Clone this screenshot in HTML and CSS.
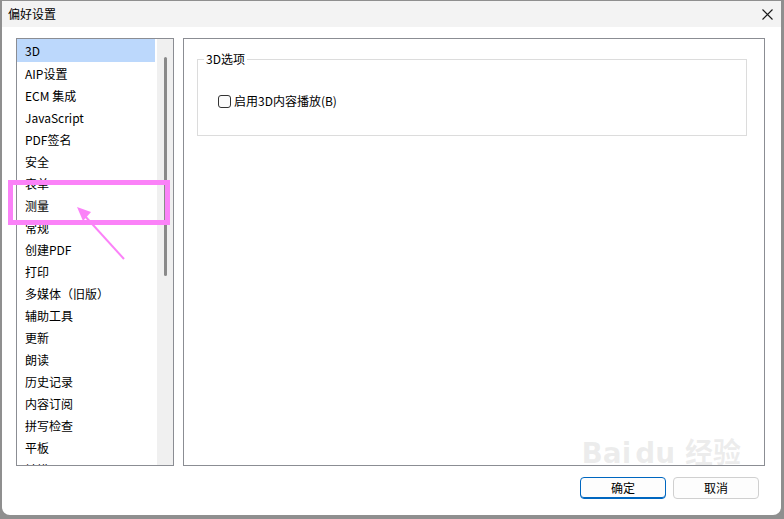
FILE: index.html
```html
<!DOCTYPE html>
<html lang="zh-CN">
<head>
<meta charset="utf-8">
<title>偏好设置</title>
<link rel="stylesheet" href="styles.css">
</head>
<body>
<div class="window">
  <div class="titlebar">
    <span class="title">偏好设置</span>
    <svg class="close" width="11" height="11" viewBox="0 0 11 11"><path d="M0.5 0.5 L10.5 10.5 M10.5 0.5 L0.5 10.5" stroke="#1a1a1a" stroke-width="1.1" fill="none"/></svg>
  </div>
  <div class="content">
    <div class="listbox">
      <ul class="items">
        <li class="item selected">3D</li>
        <li class="item">AIP设置</li>
        <li class="item">ECM 集成</li>
        <li class="item">JavaScript</li>
        <li class="item">PDF签名</li>
        <li class="item">安全</li>
        <li class="item">表单</li>
        <li class="item">测量</li>
        <li class="item">常规</li>
        <li class="item">创建PDF</li>
        <li class="item">打印</li>
        <li class="item">多媒体（旧版）</li>
        <li class="item">辅助工具</li>
        <li class="item">更新</li>
        <li class="item">朗读</li>
        <li class="item">历史记录</li>
        <li class="item">内容订阅</li>
        <li class="item">拼写检查</li>
        <li class="item">平板</li>
        <li class="item">触摸</li>
      </ul>
      <div class="scrollbar"><div class="thumb"></div></div>
    </div>
    <div class="panel">
      <fieldset class="group">
        <legend class="legend">3D选项</legend>
        <label class="check-row"><span class="checkbox"></span><span>启用3D内容播放(B)</span></label>
      </fieldset>
    </div>
  </div>
  <div class="footer">
    <button class="btn primary">确定</button>
    <button class="btn">取消</button>
  </div>
  <div class="watermark">Bai<span class="wm-du">du</span> 经验</div>
</div>
<svg class="annot" width="784" height="519" viewBox="0 0 784 519">
  <rect x="10.5" y="182.5" width="157" height="40" fill="none" stroke="#fb82f8" stroke-width="5"/>
  <line x1="124" y1="259" x2="84" y2="215" stroke="#fb82f8" stroke-width="2"/>
  <polygon points="77,207 91,212 83,221" fill="#fb82f8"/>
</svg>
</body>
</html>
```
FILE: styles.css
```css
* { box-sizing: border-box; }
html, body { margin: 0; padding: 0; }
body {
  width: 784px;
  height: 519px;
  background: #8f8f8f;
  padding: 1px 3px 4px 2px;
  font-family: "Noto Sans CJK SC", "Microsoft YaHei", sans-serif;
  font-size: 12px;
  color: #000;
  overflow: hidden;
  position: relative;
}
.window {
  width: 779px;
  height: 514px;
  background: #fff;
  border-radius: 0 0 8px 8px;
  display: flex;
  flex-direction: column;
  position: relative;
  overflow: hidden;
}
.titlebar {
  height: 26px;
  background: #f3f3f3;
  display: flex;
  align-items: center;
  justify-content: space-between;
  padding: 0 8px 0 6px;
  flex: none;
}
.title { font-size: 12px; line-height: 16px; }
.close { display: block; margin-top: 1px; }
.content {
  display: flex;
  gap: 9px;
  padding: 11px 16px 0 14px;
  height: 439px;
  flex: none;
}
.listbox {
  width: 158px;
  height: 428px;
  border: 1px solid #8b8d93;
  display: flex;
  overflow: hidden;
  flex: none;
}
.items {
  list-style: none;
  margin: 0 2px 0 0;
  padding: 0;
  flex: 1;
  overflow: hidden;
}
.item {
  height: 22px;
  line-height: 24px;
  padding-left: 8px;
  white-space: nowrap;
}
.item:first-child { height: 23px; line-height: 24px; }
.selected { background: #bcd8fc; }
.scrollbar {
  width: 16px;
  background: #f0f0f0;
  display: flex;
  justify-content: center;
  padding-top: 18px;
  flex: none;
}
.thumb {
  width: 3px;
  height: 219px;
  background: #8a8a8a;
  border-radius: 2px;
}
.panel {
  flex: 1;
  height: 428px;
  border: 1px solid #8b8d93;
  padding: 12px 17px 0 13px;
}
.group {
  margin: 0;
  padding: 0;
  border: 1px solid #dcdcdc;
  height: 85px;
  min-width: 0;
}
.legend {
  margin-left: 6px;
  padding: 0 2px;
  line-height: 16px;
  font-size: 12px;
}
.check-row {
  display: flex;
  align-items: center;
  gap: 3px;
  margin: 26px 0 0 20px;
  line-height: 16px;
}
.checkbox {
  width: 13px;
  height: 13px;
  border: 1px solid #333;
  border-radius: 3px;
  background: #fbfbfb;
  display: inline-block;
}
.footer {
  display: flex;
  justify-content: flex-end;
  gap: 7px;
  padding: 11px 22px 0 0;
}
.btn {
  width: 86px;
  height: 22px;
  font-family: inherit;
  font-size: 12px;
  color: #000;
  background: #fdfdfd;
  border: 1px solid #d0d0d0;
  border-radius: 4px;
  padding: 0;
  line-height: 20px;
}
.btn.primary {
  border: 1px solid #0067c0;
  box-shadow: inset 0 -1px 0 #0067c0;
}
.watermark {
  position: absolute;
  right: 40px;
  top: 438px;
  color: rgba(170, 170, 170, 0.22);
  font-family: "DejaVu Sans", "Noto Sans CJK SC", sans-serif;
  font-size: 28px;
  font-weight: bold;
  line-height: 30px;
  pointer-events: none;
}
.wm-du { margin-left: 4px; }
.annot {
  position: absolute;
  left: 0;
  top: 0;
  pointer-events: none;
}
```
